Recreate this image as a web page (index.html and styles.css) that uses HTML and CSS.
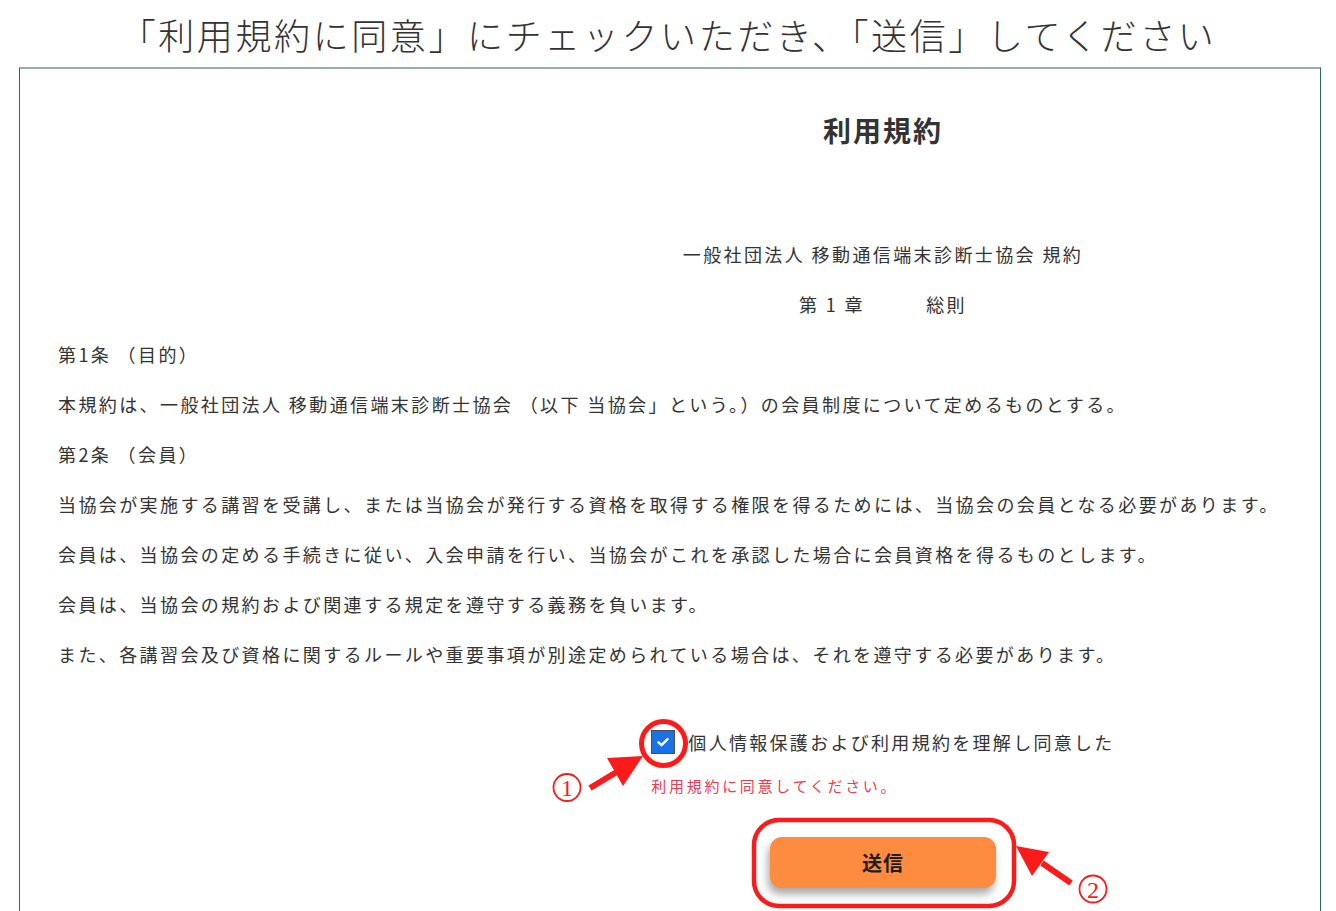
FILE: index.html
```html
<!DOCTYPE html>
<html lang="ja">
<head>
<meta charset="utf-8">
<title>利用規約</title>
<link rel="stylesheet" href="styles.css">
</head>
<body>
<div class="page">
  <h1 class="instruction">「利用規約に同意」にチェックいただき、「送信」してください</h1>
  <section class="terms">
    <h2 class="terms-title">利用規約</h2>
    <p class="line center first">一般社団法人 移動通信端末診断士協会 規約</p>
    <p class="line center">第 1 章　　　総則</p>
    <p class="line">第1条 （目的）</p>
    <p class="line">本規約は、一般社団法人 移動通信端末診断士協会 （以下 当協会」という。）の会員制度について定めるものとする。</p>
    <p class="line">第2条 （会員）</p>
    <p class="line">当協会が実施する講習を受講し、または当協会が発行する資格を取得する権限を得るためには、当協会の会員となる必要があります。</p>
    <p class="line">会員は、当協会の定める手続きに従い、入会申請を行い、当協会がこれを承認した場合に会員資格を得るものとします。</p>
    <p class="line">会員は、当協会の規約および関連する規定を遵守する義務を負います。</p>
    <p class="line">また、各講習会及び資格に関するルールや重要事項が別途定められている場合は、それを遵守する必要があります。</p>

    <div class="agree">
      <div class="agree-inner">
        <label class="agree-row">
          <span class="checkbox">
            <svg viewBox="0 0 24 24" width="24" height="24" aria-hidden="true">
              <path d="M7 12.3 L10.4 15.5 L17 8.8" fill="none" stroke="#fff" stroke-width="2.6" stroke-linecap="round" stroke-linejoin="round"/>
            </svg>
          </span>
          <span class="agree-text">個人情報保護および利用規約を理解し同意した</span>
        </label>
        <p class="error">利用規約に同意してください。</p>
      </div>
      <button class="submit" type="button">送信</button>
    </div>
  </section>

  <svg class="annotations" viewBox="0 0 1336 911" width="1336" height="911" aria-hidden="true">
    <circle cx="663.5" cy="743.5" r="22" fill="none" stroke="#fb1b1b" stroke-width="5"/>
    <line x1="590" y1="788" x2="620" y2="770" stroke="#fb1b1b" stroke-width="6"/>
    <polygon points="607,758 643,756 623,786" fill="#fb1b1b"/>
    <circle cx="567" cy="787.5" r="13.5" fill="none" stroke="#fb1b1b" stroke-width="1.8"/>
    <text x="567" y="796" class="num">1</text>

    <rect x="754" y="820" width="260" height="86" rx="25" ry="25" fill="none" stroke="#fb1b1b" stroke-width="4.5"/>
    <line x1="1071" y1="883" x2="1042" y2="863" stroke="#fb1b1b" stroke-width="6"/>
    <polygon points="1016,846 1049,852 1032,876" fill="#fb1b1b"/>
    <circle cx="1093" cy="889" r="13.5" fill="none" stroke="#fb1b1b" stroke-width="1.8"/>
    <text x="1093" y="897.5" class="num">2</text>
  </svg>
</div>
</body>
</html>
```

FILE: styles.css
```css
html, body {
  margin: 0;
  padding: 0;
  overflow: hidden;
  background: #ffffff;
}

body {
  font-family: "Noto Sans CJK JP", "Noto Sans", sans-serif;
  color: #333333;
}

.page {
  position: relative;
  width: 1336px;
}

.instruction {
  margin: 0;
  height: 67px;
  line-height: 68px;
  text-align: center;
  font-size: 36px;
  font-weight: 300;
  letter-spacing: 2.6px;
  color: #333333;
}

.terms {
  margin: 0 15px 0 19px;
  border-left: 1px solid #2a6a52;
  border-right: 1px solid #2a6a52;
  border-top: 2px solid #93b4a2;
  padding: 36px 38px 80px 38px;
}

.terms-title {
  margin: 0;
  line-height: 50px;
  font-size: 28px;
  font-weight: 700;
  letter-spacing: 2px;
  text-align: center;
  padding-left: 426px;
  color: #333333;
}

.line {
  margin: 0;
  line-height: 50px;
  font-size: 18px;
  letter-spacing: 2.4px;
  white-space: nowrap;
}

.center {
  text-align: center;
  padding-left: 426px;
}

.first {
  margin-top: 74px;
}

.agree {
  padding-left: 426px;
  display: flex;
  flex-direction: column;
  align-items: center;
}

.agree-inner {
  margin-top: 48px;
  display: flex;
  flex-direction: column;
  align-items: flex-start;
}

.agree-row {
  display: flex;
  align-items: center;
  gap: 13px;
  height: 30px;
  font-size: 18px;
  letter-spacing: 2.3px;
  white-space: nowrap;
}

.checkbox {
  width: 22px;
  height: 22px;
  background: #1b72e6;
  border: 1px solid #4a4f58;
  display: flex;
  align-items: center;
  justify-content: center;
}

.checkbox svg {
  width: 22px;
  height: 22px;
}

.error {
  margin: 18px 0 0 0;
  line-height: 22px;
  font-size: 15px;
  letter-spacing: 2.7px;
  color: #f33a4c;
  white-space: nowrap;
}

.submit {
  margin-top: 40px;
  width: 226px;
  height: 51px;
  border: none;
  border-radius: 12px;
  background: #fd8b40;
  box-shadow: -2px 6px 9px rgba(0, 0, 0, 0.35);
  font-family: "Noto Sans CJK JP", "Noto Sans", sans-serif;
  font-size: 20px;
  font-weight: 700;
  color: #1e1e1e;
  letter-spacing: 1px;
}

.annotations {
  position: absolute;
  top: 0;
  left: 0;
  pointer-events: none;
}

.num {
  font-family: "Liberation Serif", "DejaVu Serif", serif;
  font-size: 24px;
  font-weight: 400;
  fill: #fb1b1b;
  text-anchor: middle;
}
```
